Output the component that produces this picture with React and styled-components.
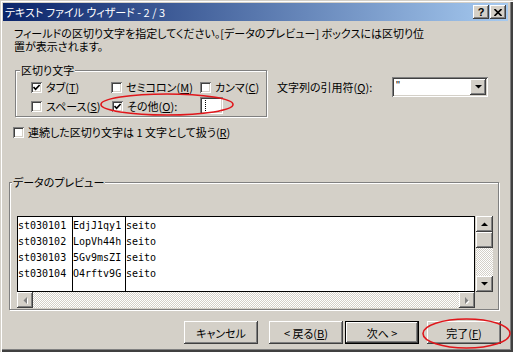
import React from 'react';
import styled, { createGlobalStyle } from 'styled-components';

const Global = createGlobalStyle`
  html, body { margin: 0; padding: 0; background: #d4d0c8; }
  body { width: 513px; height: 352px; overflow: hidden; }
`;

const raised = `
  background: #d4d0c8;
  box-shadow: inset -1px -1px #404040, inset 1px 1px #fff, inset -2px -2px #808080, inset 2px 2px #d4d0c8;
`;
const sunken = `
  background: #fff;
  box-shadow: inset 1px 1px #808080, inset -1px -1px #fff, inset 2px 2px #404040, inset -2px -2px #d4d0c8;
`;

const Window = styled.div`
  position: relative;
  box-sizing: border-box;
  width: 513px;
  height: 352px;
  padding: 3px 5px 3px 3px;
  background: #d4d0c8;
  box-shadow: inset 1px 1px #d4d0c8, inset 2px 2px #fff, inset -1px -1px #404040, inset -2px -2px #404040, inset -3px -3px #808080;
  font-family: "Noto Sans CJK JP", sans-serif;
  font-size: 11px;
  font-feature-settings: "palt";
  color: #000;
  display: flex;
  flex-direction: column;
`;

const TitleBar = styled.div`
  height: 18px;
  display: flex;
  align-items: center;
  padding: 0 2px 0 2px;
  background: linear-gradient(to right, #0a246a, #a6caf0);
  color: #fff;
`;

const TitleText = styled.span`
  flex: 1;
  line-height: 18px;
  white-space: pre;
`;

const CaptionBtn = styled.div`
  ${raised}
  width: 16px;
  height: 14px;
  margin-left: ${p => p.$ml || 0}px;
  display: flex;
  align-items: center;
  justify-content: center;
  color: #000;
  font-family: "Liberation Sans", sans-serif;
  font-weight: bold;
  font-size: 11px;
  line-height: 14px;
`;

const Description = styled.p`
  margin: 6px 0 0 11px;
  line-height: 13px;
  white-space: nowrap;
`;

const TopRow = styled.div`
  display: flex;
  margin: 17px 0 0 12px;
`;

const GroupBox = styled.div`
  position: relative;
  box-sizing: border-box;
  width: ${p => p.$w}px;
  height: ${p => (p.$h ? `${p.$h}px` : 'auto')};
  border: 1px solid #808080;
  box-shadow: inset 1px 1px #fff, 1px 1px #fff;
  padding: ${p => p.$pad};
`;

const Legend = styled.span`
  position: absolute;
  top: -8px;
  left: ${p => p.$left}px;
  padding: 0 1px;
  background: #d4d0c8;
  line-height: 14px;
`;

const CheckGrid = styled.div`
  display: grid;
  grid-template-columns: 80px 89px auto;
  grid-auto-rows: 16px;
  row-gap: 3px;
`;

const CheckItem = styled.div`
  display: flex;
  align-items: center;
  gap: 4px;
  height: 16px;
  margin-left: ${p => p.$ml || 0}px;
  margin-top: ${p => p.$mt || 0}px;
  white-space: nowrap;
`;

const CheckBox = styled.div`
  ${sunken}
  box-sizing: border-box;
  width: 11px;
  height: 11px;
  display: flex;
  align-items: center;
  justify-content: center;
  flex: none;
`;

const EditBox = styled.div`
  ${sunken}
  box-sizing: border-box;
  width: 23px;
  height: 17px;
  margin-top: -1px;
  padding: 3px 0 0 5px;
`;

const Caret = styled.div`
  width: 1px;
  height: 11px;
  background: repeating-linear-gradient(#000 0 1px, #fff 1px 2px);
`;

const QuoteCol = styled.div`
  display: flex;
  align-items: center;
  margin-left: 10px;
  padding-top: 7px;
  align-self: flex-start;
`;

const QuoteLabel = styled.span`
  width: 115px;
  white-space: nowrap;
`;

const Combo = styled.div`
  ${sunken}
  box-sizing: border-box;
  width: 96px;
  height: 20px;
  padding: 2px;
  display: flex;
  align-items: flex-start;
`;

const ComboText = styled.span`
  flex: 1;
  padding-left: 2px;
  font-family: "Liberation Sans", sans-serif;
  font-size: 11px;
  line-height: 13px;
`;

const SmallBtn = styled.div`
  ${raised}
  box-sizing: border-box;
  width: ${p => p.$w || 16}px;
  height: ${p => p.$h || 16}px;
  display: flex;
  align-items: center;
  justify-content: center;
  flex: none;
`;

const PreviewGroup = styled(GroupBox)`
  margin: 42px 0 0 6px;
`;

const PreviewGrid = styled.div`
  display: grid;
  grid-template-columns: 458px 17px;
  grid-template-rows: 76px 16px;
  column-gap: 1px;
`;

const DataBox = styled.div`
  box-sizing: border-box;
  border: 1px solid #000;
  background: #fff;
  display: flex;
  padding-top: 1px;
  overflow: hidden;
`;

const DataCol = styled.div`
  box-sizing: border-box;
  width: ${p => (p.$w ? `${p.$w}px` : 'auto')};
  flex: ${p => (p.$w ? 'none' : 1)};
  border-right: ${p => (p.$line ? '1px solid #000' : 'none')};
  margin-top: -1px;
  padding-top: 1px;
  font-family: "DejaVu Sans Mono", monospace;
  font-size: 10px;
  line-height: 16px;
  white-space: pre;
`;

const dither = `
  background-color: #d4d0c8;
  background-image: repeating-conic-gradient(#fff 0 25%, #d4d0c8 0 50%);
  background-size: 2px 2px;
`;

const VScroll = styled.div`
  ${dither}
  display: flex;
  flex-direction: column;
`;

const VTrack = styled.div`
  flex: 1;
`;

const HScroll = styled.div`
  ${dither}
  display: flex;
  justify-content: space-between;
`;

const Corner = styled.div`
  background: #d4d0c8;
`;

const ButtonRow = styled.div`
  display: flex;
  margin: 11px 0 0 181px;
`;

const Button = styled.div`
  ${raised}
  box-sizing: border-box;
  width: 74px;
  height: 23px;
  margin-left: ${p => p.$ml || 0}px;
  display: flex;
  align-items: center;
  justify-content: center;
  white-space: pre;
  ${p => p.$default && `
    border: 1px solid #000;
    box-shadow: inset -1px -1px #404040, inset 1px 1px #fff, inset -2px -2px #808080;
  `}
`;

const Ellipse = styled.svg`
  position: absolute;
  left: ${p => p.$x}px;
  top: ${p => p.$y}px;
  overflow: visible;
  pointer-events: none;
`;

const Tick = () => (
  <svg width="7" height="7" viewBox="0 0 7 7">
    <path d="M0.5 3 L2.6 5.3 L6.6 1" fill="none" stroke="#000" strokeWidth="1.7" />
  </svg>
);

const Check = ({ checked, children, ...rest }) => (
  <CheckItem {...rest}>
    <CheckBox>{checked && <Tick />}</CheckBox>
    <span>{children}</span>
  </CheckItem>
);

const Arrow = ({ dir, gray }) => {
  const pts = {
    up: '0,4 7,4 3.5,0.5',
    down: '0,0 7,0 3.5,3.5',
    left: '4,0 4,7 0.5,3.5',
    right: '0,0 0,7 3.5,3.5',
  }[dir];
  const vert = dir === 'up' || dir === 'down';
  return (
    <svg width={vert ? 7 : 5} height={vert ? 5 : 7} viewBox={vert ? '0 0 7 5' : '0 0 5 7'}>
      {gray && <polygon points={pts} fill="#fff" transform="translate(1,1)" />}
      <polygon points={pts} fill={gray ? '#808080' : '#000'} />
    </svg>
  );
};

const rows = [
  ['st030101', 'EdjJ1qy1', 'seito'],
  ['st030102', 'LopVh44h', 'seito'],
  ['st030103', '5Gv9msZI', 'seito'],
  ['st030104', 'O4rftv9G', 'seito'],
];

export default function App() {
  return (
    <>
      <Global />
      <Window>
        <TitleBar>
          <TitleText>テキスト ファイル ウィザード - 2 / 3</TitleText>
          <CaptionBtn>?</CaptionBtn>
          <CaptionBtn $ml={1}>
            <svg width="8" height="7" viewBox="0 0 8 7">
              <path d="M0.5 0 L7.5 7 M7.5 0 L0.5 7" stroke="#000" strokeWidth="1.6" />
            </svg>
          </CaptionBtn>
        </TitleBar>

        <Description>
          フィールドの区切り文字を指定してください。[データのプレビュー] ボックスには区切り位
          <br />
          置が表示されます。
        </Description>

        <TopRow>
          <GroupBox $w={252} $pad="8px 0 2px 15px">
            <Legend $left={4}>区切り文字</Legend>
            <CheckGrid>
              <Check checked>タブ(<u>T</u>)</Check>
              <Check>セミコロン(<u>M</u>)</Check>
              <Check>カンマ(<u>C</u>)</Check>
              <Check>スペース(<u>S</u>)</Check>
              <Check checked $ml={1}>その他(<u>O</u>):</Check>
              <EditBox>
                <Caret />
              </EditBox>
            </CheckGrid>
          </GroupBox>
          <QuoteCol>
            <QuoteLabel>文字列の引用符(<u>Q</u>):</QuoteLabel>
            <Combo>
              <ComboText>"</ComboText>
              <SmallBtn $w={16} $h={16}>
                <Arrow dir="down" />
              </SmallBtn>
            </Combo>
          </QuoteCol>
        </TopRow>

        <Check $ml={10} $mt={7}>連続した区切り文字は 1 文字として扱う(<u>R</u>)</Check>

        <PreviewGroup $w={490} $h={128} $pad="33px 0 1px 7px">
          <Legend $left={2}>データのプレビュー</Legend>
          <PreviewGrid>
            <DataBox>
              <DataCol $w={55} $line>{rows.map(r => r[0]).join('\n')}</DataCol>
              <DataCol $w={53} $line>{rows.map(r => r[1]).join('\n')}</DataCol>
              <DataCol>{rows.map(r => r[2]).join('\n')}</DataCol>
            </DataBox>
            <VScroll>
              <SmallBtn $w={17} $h={16}><Arrow dir="up" /></SmallBtn>
              <SmallBtn $w={17} $h={16} />
              <VTrack />
              <SmallBtn $w={17} $h={16}><Arrow dir="down" /></SmallBtn>
            </VScroll>
            <HScroll>
              <SmallBtn $w={16} $h={16}><Arrow dir="left" gray /></SmallBtn>
              <SmallBtn $w={16} $h={16}><Arrow dir="right" gray /></SmallBtn>
            </HScroll>
            <Corner />
          </PreviewGrid>
        </PreviewGroup>

        <ButtonRow>
          <Button>キャンセル</Button>
          <Button $ml={11}>{'< 戻る('}<u>B</u>{')'}</Button>
          <Button $ml={2} $default>{'次へ >'}</Button>
          <Button $ml={8}>完了(<u>F</u>)</Button>
        </ButtonRow>

        <Ellipse $x={100} $y={93} width="134" height="23">
          <ellipse cx="67" cy="11.5" rx="66" ry="10.5" fill="none" stroke="#e0161b" strokeWidth="1.6" />
        </Ellipse>
        <Ellipse $x={422} $y={318} width="89" height="31">
          <ellipse cx="44.5" cy="15.5" rx="43.5" ry="14.5" fill="none" stroke="#e0161b" strokeWidth="1.6" />
        </Ellipse>
      </Window>
    </>
  );
}
